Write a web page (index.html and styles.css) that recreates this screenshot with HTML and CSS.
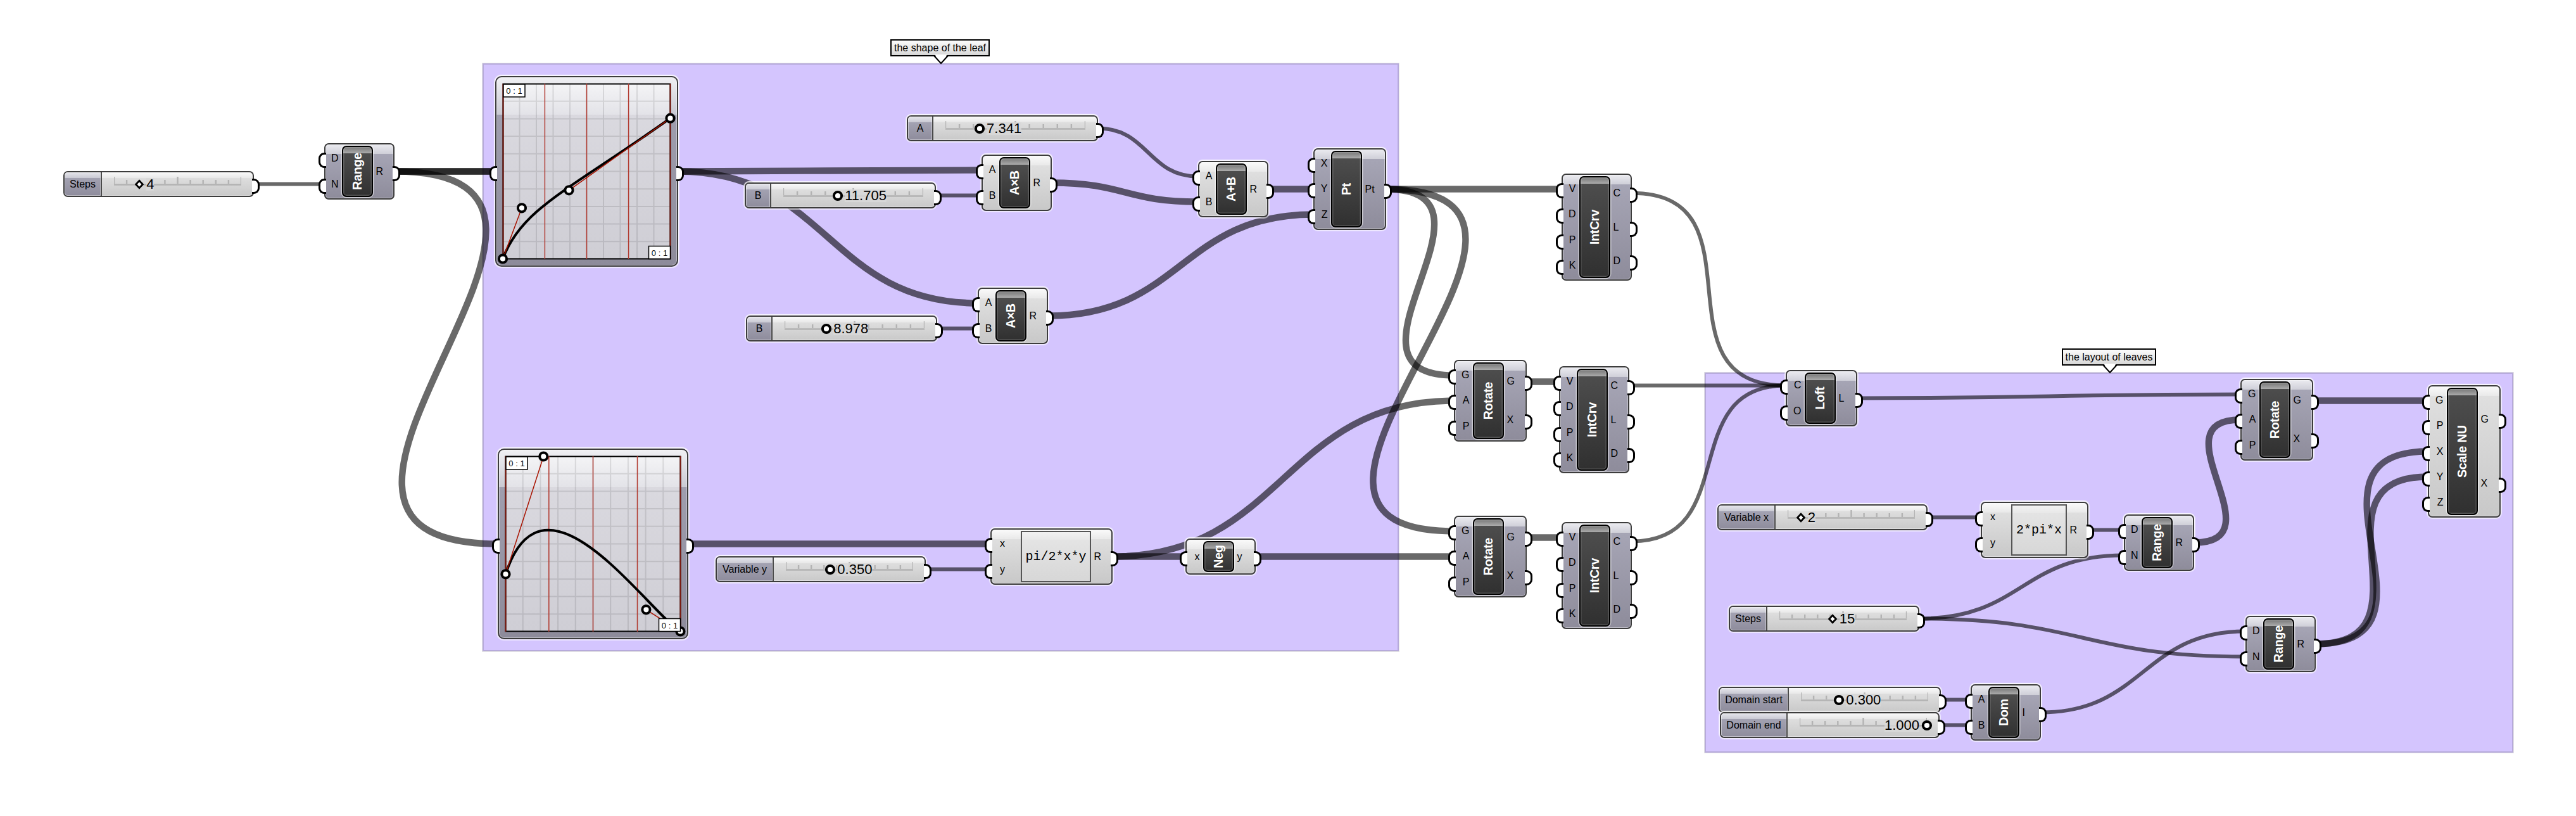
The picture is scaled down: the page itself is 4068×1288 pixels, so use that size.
FILE: index.html
```html
<!DOCTYPE html>
<html lang="en">
<head>
<meta charset="utf-8">
<title>Leaf definition</title>
<link rel="stylesheet" href="styles.css">
</head>
<body>
<svg class="defs" aria-hidden="true">
  <linearGradient id="paper-fill" x2="0" y2="1"><stop offset="0" stop-color="#dcdbe1"/><stop offset="1" stop-color="#cfced5"/></linearGradient>
  <linearGradient id="gloss-fill" x2="0" y2="1"><stop offset="0" stop-color="#f4f4f6"/><stop offset="1" stop-color="#e3e3e8"/></linearGradient>
  <symbol id="rail" viewBox="0 0 200 14" preserveAspectRatio="none">
    <path d="M0 12.5H200M20 5V11M40 5V11M60 5V11M80 5V11M120 5V11M140 5V11M160 5V11M180 5V11M0 0V11M100 0V11M200 0V11"/>
  </symbol>
  <symbol id="ring" viewBox="0 0 18 18"><circle cx="9" cy="9" r="6.1"/></symbol>
  <symbol id="diamond" viewBox="0 0 18 18"><path d="M9 3.2 14.4 9 9 14.8 3.6 9Z"/></symbol>
</svg>

<main class="canvas">
  <section class="group group-shape"></section>
  <section class="group group-layout"></section>

  <svg class="wires" viewBox="0 0 4068 1288">
    <g class="thin">
      <path d="M401 290.5H512"/>
      <path d="M1734 202.5C1813 202.5 1813 278.5 1892 278.5"/>
      <path d="M1478 308.5H1550"/>
      <path d="M1479 518.5H1544"/>
      <path d="M1462 898.5H1564"/>
      <path d="M2577 304.8C2791 304.8 2606 608.5 2820 608.5"/>
      <path d="M2573 608.5H2820"/>
      <path d="M2577 854.5C2752 854.5 2645 608.5 2820 608.5"/>
      <path d="M2933 628.5C3235 628.5 3236 622.5 3538 622.5"/>
      <path d="M3043 816.5H3128"/>
      <path d="M3298 836.5H3354"/>
      <path d="M3031 976.5C3193 976.5 3192 876.5 3354 876.5"/>
      <path d="M3031 976.5C3288 976.5 3289 1036.5 3546 1036.5"/>
      <path d="M3065 1104.5H3112"/>
      <path d="M3063 1144.5H3112"/>
      <path d="M3223 1124.5C3385 1124.5 3384 996.5 3546 996.5"/>
    </g>
    <g class="thick">
      <path d="M623 270.5H782"/>
      <path d="M623 270.5H782"/>
      <path d="M623 270.5C1052 270.5 345 858.5 786 858.5"/>
      <path d="M1071 270.5C1310 270.5 1311 268.5 1550 268.5"/>
      <path d="M1071 270.5C1307 270.5 1308 478.5 1544 478.5"/>
      <path d="M1661 288.5C1776 288.5 1777 318.5 1892 318.5"/>
      <path d="M1656 498.5C1865 498.5 1865 338.5 2074 338.5"/>
      <path d="M2003 298.5H2074"/>
      <path d="M1087 858.5H1564"/>
      <path d="M1757 878.5H1872"/>
      <path d="M1757 878.5C2026 878.5 2027 632.5 2296 632.5"/>
      <path d="M1983 878.5H2296"/>
      <path d="M2189 298.5H2466"/>
      <path d="M2189 298.5C2398 298.5 2087 592.5 2296 592.5"/>
      <path d="M2189 298.5C2577 298.5 1904 838.5 2296 838.5"/>
      <path d="M2411 602.5H2462"/>
      <path d="M2411 848.5H2466"/>
      <path d="M3465 856.5C3601 856.5 3402 662.5 3538 662.5"/>
      <path d="M3653 632.5H3834"/>
      <path d="M3657 1016.5C3884 1016.5 3607 712.5 3834 712.5"/>
      <path d="M3657 1016.5C3853 1016.5 3638 752.5 3834 752.5"/>
    </g>
  </svg>

  <div class="tag tag-shape">the shape of the leaf<svg class="tail" viewBox="0 0 26 16"><path class="mask" d="M3 0H23L13 13Z"/><path d="M2 2 13 14 24 2"/></svg></div>
  <div class="tag tag-layout">the layout of leaves<svg class="tail" viewBox="0 0 26 16"><path class="mask" d="M3 0H23L13 13Z"/><path d="M2 2 13 14 24 2"/></svg></div>

  <!-- number sliders -->
  <div class="slider steps-1">
    <span class="name">Steps</span>
    <div class="track"><svg class="rail"><use href="#rail"/></svg><span class="thumb" style="left:20%"><svg><use href="#diamond"/></svg><b>4</b></span></div>
  </div>
  <div class="slider slider-a">
    <span class="name">A</span>
    <div class="track"><svg class="rail"><use href="#rail"/></svg><span class="thumb" style="left:24.47%"><svg><use href="#ring"/></svg><b>7.341</b></span></div>
  </div>
  <div class="slider slider-b1">
    <span class="name">B</span>
    <div class="track"><svg class="rail"><use href="#rail"/></svg><span class="thumb" style="left:39.02%"><svg><use href="#ring"/></svg><b>11.705</b></span></div>
  </div>
  <div class="slider slider-b2">
    <span class="name">B</span>
    <div class="track"><svg class="rail"><use href="#rail"/></svg><span class="thumb" style="left:29.93%"><svg><use href="#ring"/></svg><b>8.978</b></span></div>
  </div>
  <div class="slider variable-y">
    <span class="name">Variable y</span>
    <div class="track"><svg class="rail"><use href="#rail"/></svg><span class="thumb" style="left:35%"><svg><use href="#ring"/></svg><b>0.350</b></span></div>
  </div>
  <div class="slider variable-x">
    <span class="name">Variable x</span>
    <div class="track"><svg class="rail"><use href="#rail"/></svg><span class="thumb" style="left:10.3%"><svg><use href="#diamond"/></svg><b>2</b></span></div>
  </div>
  <div class="slider steps-2">
    <span class="name">Steps</span>
    <div class="track"><svg class="rail"><use href="#rail"/></svg><span class="thumb" style="left:41.7%"><svg><use href="#diamond"/></svg><b>15</b></span></div>
  </div>
  <div class="slider domain-start">
    <span class="name">Domain start</span>
    <div class="track"><svg class="rail"><use href="#rail"/></svg><span class="thumb" style="left:30%"><svg><use href="#ring"/></svg><b>0.300</b></span></div>
  </div>
  <div class="slider domain-end">
    <span class="name">Domain end</span>
    <div class="track"><svg class="rail"><use href="#rail"/></svg><span class="thumb flip" style="left:100%"><svg><use href="#ring"/></svg><b>1.000</b></span></div>
  </div>

  <!-- graph mappers -->
  <div class="node graph graph-1">
    <div class="in"><i></i></div>
    <svg class="plot" viewBox="0 0 265 277">
      <rect class="paper" width="265" height="277"/>
      <rect class="gloss" width="265" height="49"/>
      <path class="grid" d="M26.5 0V277M53 0V277M79.5 0V277M106 0V277M132.5 0V277M159 0V277M185.5 0V277M212 0V277M238.5 0V277M0 27.7H265M0 55.4H265M0 83.1H265M0 110.8H265M0 138.5H265M0 166.2H265M0 193.9H265M0 221.6H265M0 249.3H265"/>
      <rect class="frame" x=".5" y=".5" width="264" height="276"/>
      <path class="mark" d="M66.4 0V277M132.5 0V277M198.6 0V277"/>
      <path class="mark side" d="M.5 0V277M264.5 0V277"/>
      <path class="curve" d="M0 276.5C30 196.5 104.5 168.3 264.5 54.7"/>
      <path class="handle" d="M0 276.5 30 196.3M104.5 168.3 264.5 54.7"/>
      <g class="knob"><circle cx="0" cy="276.5" r="6.1"/><circle cx="30" cy="196.3" r="6.1"/><circle cx="104.5" cy="168.3" r="6.1"/><circle cx="264.5" cy="54.7" r="6.1"/></g>
      <g class="range"><rect x="1" y="1" width="34" height="20"/><text x="18" y="16">0 : 1</text><rect x="230.5" y="256.5" width="34" height="20"/><text x="247.5" y="271.5">0 : 1</text></g>
    </svg>
    <div class="out"><i></i></div>
  </div>
  <div class="node graph graph-2">
    <div class="in"><i></i></div>
    <svg class="plot" viewBox="0 0 277 277">
      <rect class="paper" width="277" height="277"/>
      <rect class="gloss" width="277" height="49"/>
      <path class="grid" d="M27.7 0V277M55.4 0V277M83.1 0V277M110.8 0V277M138.5 0V277M166.2 0V277M193.9 0V277M221.6 0V277M249.3 0V277M0 27.7H277M0 55.4H277M0 83.1H277M0 110.8H277M0 138.5H277M0 166.2H277M0 193.9H277M0 221.6H277M0 249.3H277"/>
      <rect class="frame" x=".5" y=".5" width="276" height="276"/>
      <path class="mark" d="M68.8 0V277M138.5 0V277M208.5 0V277"/>
      <path class="mark side" d="M.5 0V277M276.5 0V277"/>
      <path class="curve" d="M.5 186.3C60.3 .5 222.4 242.3 276.4 276.5"/>
      <path class="handle" d="M.5 186.3 60.3 .5M222.4 242.3 276.4 276.5"/>
      <g class="knob"><circle cx=".5" cy="186.3" r="6.1"/><circle cx="60.3" cy=".5" r="6.1"/><circle cx="222.4" cy="242.3" r="6.1"/><circle cx="276.4" cy="276.5" r="6.1"/></g>
      <g class="range"><rect x="1" y="1" width="34" height="20"/><text x="18" y="16">0 : 1</text><rect x="242.5" y="256.5" width="34" height="20"/><text x="259.5" y="271.5">0 : 1</text></g>
    </svg>
    <div class="out"><i></i></div>
  </div>

  <!-- components -->
  <div class="node range-1"><div class="in"><i>D</i><i>N</i></div><div class="title"><span>Range</span></div><div class="out"><i>R</i></div></div>
  <div class="node light mul-1"><div class="in"><i>A</i><i>B</i></div><div class="title"><span>A×B</span></div><div class="out"><i>R</i></div></div>
  <div class="node light mul-2"><div class="in"><i>A</i><i>B</i></div><div class="title"><span>A×B</span></div><div class="out"><i>R</i></div></div>
  <div class="node light add"><div class="in"><i>A</i><i>B</i></div><div class="title"><span>A+B</span></div><div class="out"><i>R</i></div></div>
  <div class="node pt"><div class="in"><i>X</i><i>Y</i><i>Z</i></div><div class="title"><span>Pt</span></div><div class="out"><i>Pt</i></div></div>
  <div class="node light expr expr-1"><div class="in"><i>x</i><i>y</i></div><div class="formula">pi/2*x*y</div><div class="out"><i>R</i></div></div>
  <div class="node light neg"><div class="in"><i>x</i></div><div class="title"><span>Neg</span></div><div class="out"><i>y</i></div></div>
  <div class="node wide rotate-2"><div class="in"><i>G</i><i>A</i><i>P</i></div><div class="title"><span>Rotate</span></div><div class="out"><i>G</i><i>X</i></div></div>
  <div class="node wide rotate-3"><div class="in"><i>G</i><i>A</i><i>P</i></div><div class="title"><span>Rotate</span></div><div class="out"><i>G</i><i>X</i></div></div>
  <div class="node crv-1"><div class="in"><i>V</i><i>D</i><i>P</i><i>K</i></div><div class="title"><span>IntCrv</span></div><div class="out"><i>C</i><i>L</i><i>D</i></div></div>
  <div class="node crv-2"><div class="in"><i>V</i><i>D</i><i>P</i><i>K</i></div><div class="title"><span>IntCrv</span></div><div class="out"><i>C</i><i>L</i><i>D</i></div></div>
  <div class="node crv-3"><div class="in"><i>V</i><i>D</i><i>P</i><i>K</i></div><div class="title"><span>IntCrv</span></div><div class="out"><i>C</i><i>L</i><i>D</i></div></div>
  <div class="node wide loft"><div class="in"><i>C</i><i>O</i></div><div class="title"><span>Loft</span></div><div class="out"><i>L</i></div></div>
  <div class="node light expr expr-2"><div class="in"><i>x</i><i>y</i></div><div class="formula">2*pi*x</div><div class="out"><i>R</i></div></div>
  <div class="node range-2"><div class="in"><i>D</i><i>N</i></div><div class="title"><span>Range</span></div><div class="out"><i>R</i></div></div>
  <div class="node dom"><div class="in"><i>A</i><i>B</i></div><div class="title"><span>Dom</span></div><div class="out"><i>I</i></div></div>
  <div class="node wide rotate-1"><div class="in"><i>G</i><i>A</i><i>P</i></div><div class="title"><span>Rotate</span></div><div class="out"><i>G</i><i>X</i></div></div>
  <div class="node light wide scale"><div class="in"><i>G</i><i>P</i><i>X</i><i>Y</i><i>Z</i></div><div class="title"><span>Scale NU</span></div><div class="out"><i>G</i><i>X</i></div></div>
  <div class="node range-3"><div class="in"><i>D</i><i>N</i></div><div class="title"><span>Range</span></div><div class="out"><i>R</i></div></div>
</main>
</body>
</html>
```
FILE: styles.css
```css
* { box-sizing: border-box; }

body {
  margin: 0;
  background: #fff;
  font-family: "Liberation Sans", Arial, sans-serif;
  color: #000;
}

.defs { position: absolute; width: 0; height: 0; }

.canvas {
  position: relative;
  width: 4068px;
  height: 1288px;
  overflow: hidden;
}

/* groups */
.group {
  position: absolute;
  background: #d4c5fe;
  border: 2px solid #b6aada;
  box-shadow: 0 0 0 1px rgba(0, 0, 0, .1);
}
.group-shape { left: 762px; top: 100px; width: 1447px; height: 928px; }
.group-layout { left: 2692px; top: 588px; width: 1277px; height: 600px; }

/* wires */
.wires { position: absolute; inset: 0; width: 4068px; height: 1288px; }
.wires path { fill: none; stroke: rgba(0, 0, 0, .59); }
.thin path { stroke-width: 6px; }
.thick path { stroke-width: 10.4px; }

/* group captions */
.tag {
  position: absolute;
  display: flex;
  align-items: center;
  justify-content: center;
  height: 27px;
  border: 2px solid #000;
  background: linear-gradient(#fcfcfc, #d8d8d8);
  font-size: 16px;
  white-space: nowrap;
}
.tag-shape { left: 1406px; top: 62px; width: 157px; }
.tag-layout { left: 3256px; top: 550px; width: 149px; }
.tail { position: absolute; left: calc(50% - 12px); top: 22px; width: 26px; height: 16px; }
.tail path { fill: none; stroke: #000; stroke-width: 2; }
.tail .mask { fill: #fff; stroke: none; }

/* sliders */
.slider {
  position: absolute;
  display: flex;
  height: 41px;
  border: 2px solid #3c3c3c;
  border-radius: 7px;
  background: linear-gradient(#fafafa, #e8e8e8 9px, #dedede 9px, #c9c9c9);
  box-shadow: inset 0 0 0 1px rgba(255, 255, 255, .45), 0 0 1px 2px rgba(255, 255, 255, .6), 0 -1px 1px 1px rgba(255, 255, 255, .6);
}
.slider::after {
  content: "";
  position: absolute;
  right: -11px;
  top: 9.5px;
  width: 9px;
  height: 18px;
  border: 3.2px solid #000;
  border-left: 0;
  border-radius: 0 9px 9px 0;
  background: #fff;
}
.name {
  flex: none;
  display: flex;
  align-items: center;
  justify-content: center;
  width: var(--label);
  padding-top: 1px;
  border-right: 2px solid #4a4a4a;
  border-radius: 5px 0 0 5px;
  background: linear-gradient(#e6e6ec, #c9c9d3 9px, #a3a2b2 9px, #8e8c9c);
  box-shadow: inset 0 0 0 1px rgba(255, 255, 255, .45);
  font-size: 16px;
  white-space: nowrap;
}
.track { position: relative; flex: 1; margin: 0 18px 0 19px; }
.rail { display: block; width: 100%; height: 14px; margin-top: 7px; overflow: visible; }
#rail path { fill: none; stroke: #b3b3b3; stroke-width: 2.4px; vector-effect: non-scaling-stroke; }
.thumb { position: absolute; top: 9.5px; display: flex; align-items: center; height: 18px; margin-left: -9px; }
.thumb svg { flex: none; width: 18px; height: 18px; fill: #fff; stroke: #000; stroke-width: 4; }
.thumb use[href="#diamond"] { stroke-width: 2.8; }
.thumb b {
  margin-left: 2px;
  font-size: 22px;
  font-weight: 400;
  line-height: 20px;
  background: rgba(216, 216, 216, .8);
}
.thumb.flip { flex-direction: row-reverse; margin-left: 0; transform: translateX(calc(-100% + 9px)); }
.flip b { margin: 0 3px 0 0; }

.steps-1 { left: 100px; top: 270px; width: 301px; --label: 59px; }
.slider-a { left: 1432px; top: 182px; width: 302px; --label: 40px; }
.slider-b1 { left: 1176px; top: 288px; width: 302px; --label: 40px; }
.slider-b2 { left: 1178px; top: 498px; width: 302px; --label: 40px; }
.variable-y { left: 1130px; top: 878px; width: 332px; --label: 90px; }
.variable-x { left: 2712px; top: 796px; width: 332px; --label: 90px; }
.steps-2 { left: 2730px; top: 956px; width: 301px; --label: 59px; }
.domain-start { left: 2714px; top: 1084px; width: 351px; --label: 109px; }
.domain-end { left: 2716px; top: 1124px; width: 347px; --label: 105px; }

/* components */
.node {
  --lead: 26px;
  --body: 49px;
  position: absolute;
  display: flex;
  width: 111px;
  height: 89px;
  padding: 2px 0;
  border: 2px solid #3c3c3c;
  border-radius: 7px;
  background: linear-gradient(#ebebf0, #cfcfd8 15px, #a6a5b5 15px, #8e8c9b);
  box-shadow: inset 0 0 0 1px rgba(255, 255, 255, .4), 0 0 1px 2px rgba(255, 255, 255, .6), 0 -1px 1px 1px rgba(255, 255, 255, .6);
  font-size: 16px;
}
.node.light { background: linear-gradient(#fafafa, #e9e9e9 15px, #dfdfdf 15px, #c8c8c8); }
.node.wide { --lead: 28px; width: 115px; }
.node.expr { --lead: 46px; --body: 111px; }

.in, .out { display: flex; flex-direction: column; }
.in { flex: none; width: var(--lead); }
.out { flex: 1; }
.in i, .out i {
  position: relative;
  flex: 1;
  display: flex;
  align-items: center;
  font-style: normal;
}
.in i { justify-content: flex-end; padding-right: 5.5px; }
.out i { padding-left: 4.5px; }
.expr .in i { padding-right: 25px; }
.in i::before, .out i::after {
  content: "";
  position: absolute;
  top: calc(50% - 9px);
  width: 9px;
  height: 18px;
  border: 3.2px solid #000;
  background: #fff;
}
.in i::before { left: -11px; border-right: 0; border-radius: 9px 0 0 9px; }
.out i::after { right: -11px; border-left: 0; border-radius: 0 9px 9px 0; }

.title {
  flex: none;
  display: flex;
  align-items: center;
  justify-content: center;
  width: var(--body);
  border: 2px solid #000;
  border-radius: 7px;
  background: linear-gradient(#777, #ababab 10px, #4d4d4d 10px, #303030);
  box-shadow: inset 0 0 0 1.5px rgba(255, 255, 255, .18), 0 0 0 1.5px rgba(255, 255, 255, .5);
  color: #fff;
  font-size: 19.5px;
  font-weight: 700;
}
.title span { flex: none; transform: rotate(-90deg); white-space: nowrap; letter-spacing: -.2px; }
.formula {
  flex: none;
  display: flex;
  align-items: center;
  justify-content: center;
  width: var(--body);
  border: 2px solid #555;
  background: linear-gradient(#f2f2f2, #e8e8e8 12px, #e4e4e4 12px, #d7d7d7);
  font-family: "Liberation Mono", "Courier New", monospace;
  font-size: 20px;
}

.range-1 { left: 512px; top: 226px; }
.mul-1 { left: 1550px; top: 244px; }
.mul-2 { left: 1544px; top: 454px; }
.add { left: 1892px; top: 254px; }
.pt { left: 2074px; top: 234px; width: 115px; height: 129px; }
.expr-1 { left: 1564px; top: 834px; width: 193px; }
.neg { left: 1872px; top: 850px; height: 57px; }
.rotate-2 { left: 2296px; top: 568px; height: 129px; }
.rotate-3 { left: 2296px; top: 814px; height: 129px; }
.crv-1 { left: 2466px; top: 274px; height: 169px; }
.crv-2 { left: 2462px; top: 578px; height: 169px; }
.crv-3 { left: 2466px; top: 824px; height: 169px; }
.node.loft { left: 2820px; top: 584px; width: 113px; }
.node.expr-2 { left: 3128px; top: 792px; width: 170px; --body: 88px; }
.range-2 { left: 3354px; top: 812px; }
.dom { left: 3112px; top: 1080px; }
.rotate-1 { left: 3538px; top: 598px; height: 129px; }
.scale { left: 3834px; top: 608px; height: 209px; }
.range-3 { left: 3546px; top: 972px; }

/* graph mappers */
.node.graph {
  --lead: 10px;
  height: 301px;
  padding: 10px 0;
  border-radius: 10px;
  background: linear-gradient(#f0f0f3, #c9c9d2 59px, #9f9eae 59px, #8d8b9a);
}
.graph-1 { left: 782px; top: 120px; width: 289px; }
.graph-2 { left: 786px; top: 708px; width: 301px; }
.plot { display: block; flex: none; width: 265px; height: 277px; overflow: visible; }
.graph-2 .plot { width: 277px; }
.paper { fill: url(#paper-fill); }
.gloss { fill: url(#gloss-fill); }
.grid { fill: none; stroke: rgba(0, 0, 0, .1); stroke-width: 2; }
.frame { fill: none; stroke: #000; stroke-width: 2; }
.mark { fill: none; stroke: #b13a30; stroke-width: 1.5; }
.mark.side { stroke: #7c1a10; stroke-width: 2; }
.curve { fill: none; stroke: #000; stroke-width: 4; }
.handle { fill: none; stroke: #a81300; stroke-width: 1.5; }
.knob circle { fill: #fff; stroke: #000; stroke-width: 4; }
.range rect { fill: #fff; stroke: #000; stroke-width: 1.5; }
.range text { font-size: 13px; text-anchor: middle; }
```
